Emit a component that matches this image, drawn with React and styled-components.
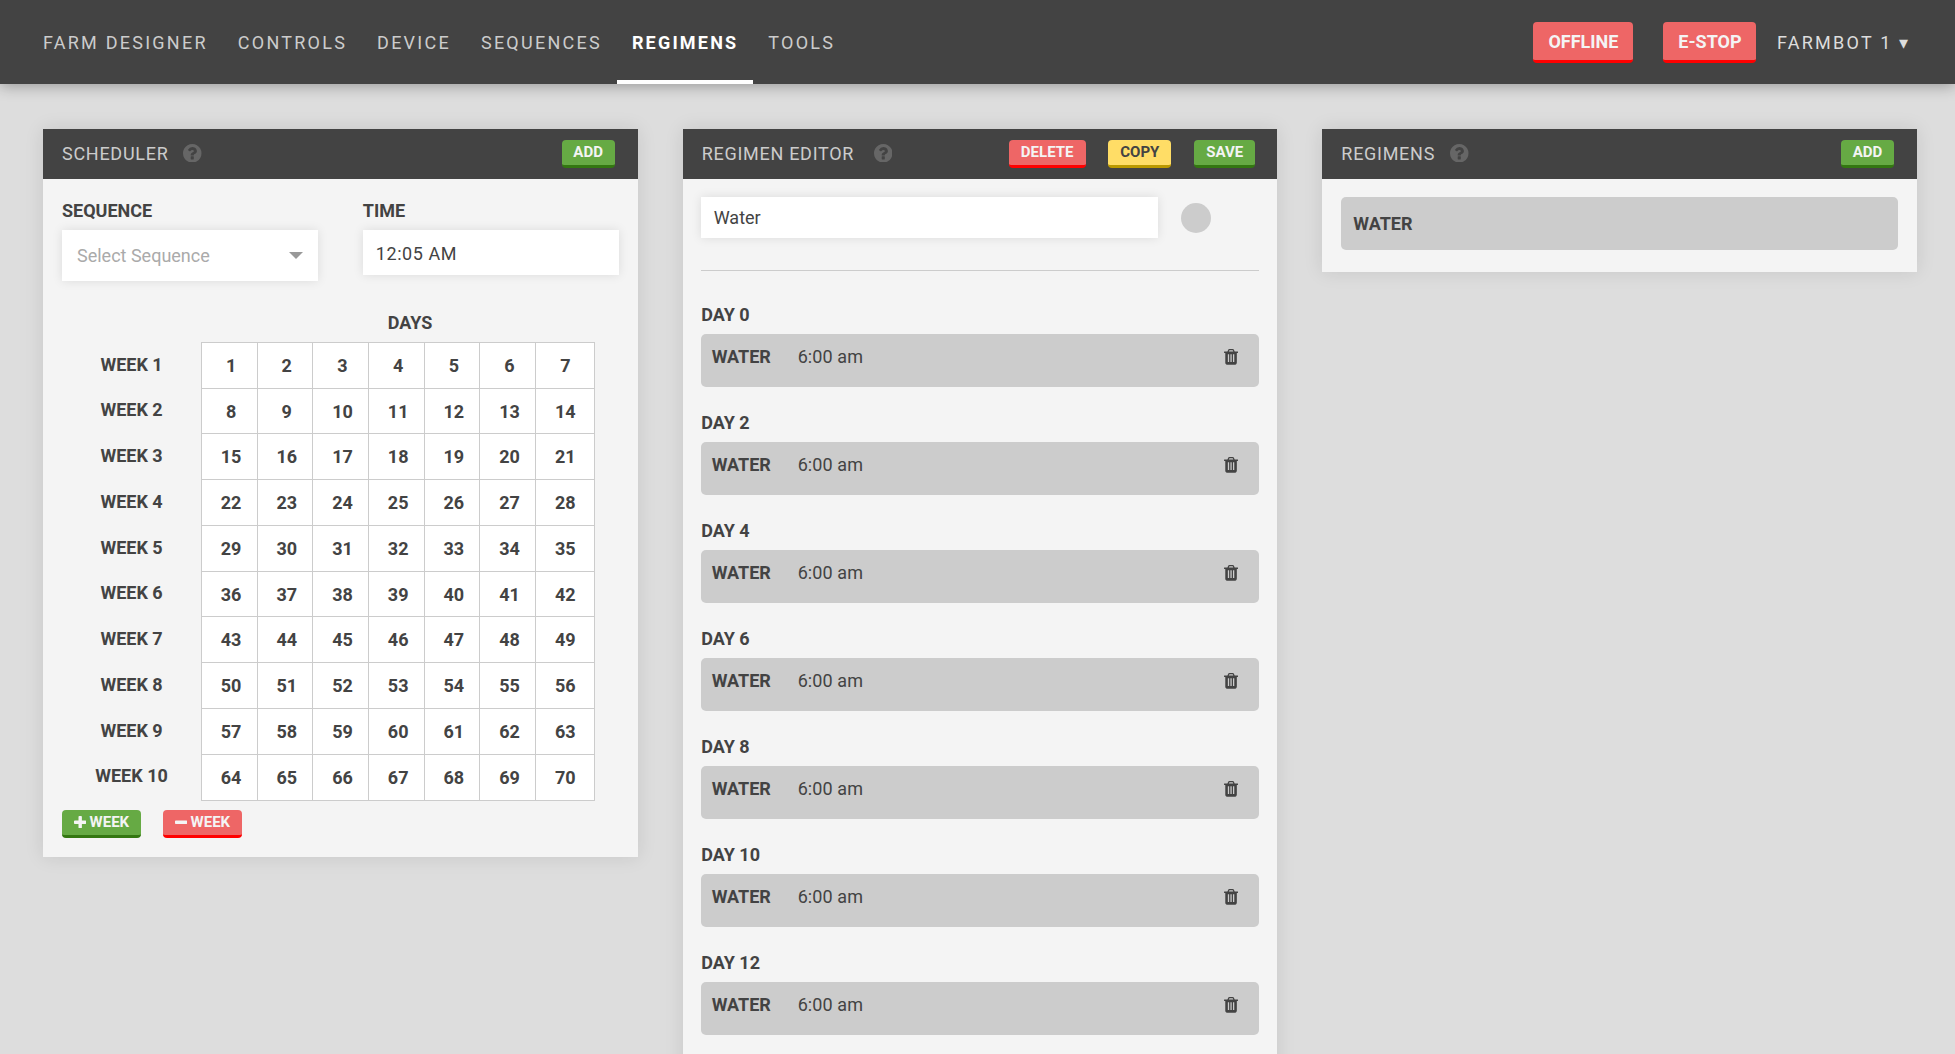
import React from 'react';
import styled, { createGlobalStyle, css } from 'styled-components';

const Global = createGlobalStyle`
  *, *::before, *::after { box-sizing: border-box; }
  html { overflow: hidden; }
  body { margin: 0; background: #ddd; color: #434343; font: 400 18px/24px Roboto, sans-serif; }
`;

const Page = styled.div`
  height: 1054px;
  overflow: hidden;
`;

const Nav = styled.nav`
  display: flex;
  justify-content: space-between;
  height: 84px;
  padding: 0 44.4px 0 28px;
  background: #434343;
  box-shadow: 0 2px 14px rgba(0, 0, 0, 0.32);
`;

const Links = styled.div`
  display: flex;
`;

const NavLink = styled.a`
  padding: 31px 15px 0;
  letter-spacing: 2.25px;
  color: #ccc;
  ${(p) => p.$active && css`
    color: #fff;
    font-weight: 700;
    letter-spacing: 2.2px;
    border-bottom: 4px solid #fff;
  `}
`;

const NavRight = styled.div`
  display: flex;
  align-items: flex-start;
`;

const tones = {
  green: ['#6a4', '#371', '#f4f4f4'],
  red: ['#e66', '#f00', '#f4f4f4'],
  yellow: ['#fd6', '#b90', '#434343'],
};

const Button = styled.button`
  display: flex;
  align-items: flex-start;
  justify-content: center;
  height: 28px;
  width: ${(p) => p.$w}px;
  padding: 3px 0 0;
  border: 0;
  border-bottom: 3px solid ${(p) => tones[p.$tone][1]};
  border-radius: 4px;
  background: ${(p) => tones[p.$tone][0]};
  color: ${(p) => tones[p.$tone][2]};
  font: 700 15px/18px Roboto, sans-serif;
  svg { margin: 2.7px 3.3px 0 0; }
`;

const NavButton = styled(Button)`
  height: 41px;
  margin: 22px 0 0 30px;
  padding-top: 8px;
  font-size: 18px;
  line-height: 24px;
`;

const Account = styled.span`
  margin: 31px 0 0 20.6px;
  letter-spacing: 2.25px;
  color: #ddd;
`;

const Columns = styled.main`
  display: grid;
  grid-template-columns: repeat(3, 1fr);
  gap: 45px;
  align-items: start;
  padding: 45px 38px 0 43px;
`;

const Widget = styled.section`
  background: #f4f4f4;
  box-shadow: 0 0 18px rgba(0, 0, 0, 0.1);
  height: ${(p) => p.$h}px;
`;

const Header = styled.header`
  display: flex;
  align-items: flex-start;
  height: 50px;
  padding: 11px ${(p) => p.$pr || 23}px 0 19px;
  gap: 22.6px;
  background: #434343;
`;

const Title = styled.h3`
  display: flex;
  margin: 2px auto 0 0;
  font-size: 18px;
  font-weight: 400;
  letter-spacing: 0.72px;
  color: #ccc;
  svg { margin: 1.5px 0 0 ${(p) => p.$gap || 15}px; }
`;

const Body = styled.div`
  padding: ${(p) => p.$pad};
`;

const Fields = styled.div`
  display: grid;
  grid-template-columns: 1fr 1fr;
  gap: 45px;
  align-items: start;
`;

const Label = styled.label`
  display: block;
  font-weight: 700;
  line-height: 24px;
`;

const Box = styled.div`
  display: flex;
  align-items: center;
  justify-content: space-between;
  height: ${(p) => p.$h}px;
  padding: 0 15px;
  background: #fff;
  box-shadow: 0 0 10px rgba(0, 0, 0, 0.1);
`;

const SelectBox = styled(Box)`
  margin-top: 7px;
  color: #aaa;
`;

const TimeBox = styled(Box)`
  margin-top: 7px;
  padding: 2px 14px 0 13px;
  letter-spacing: 0.55px;
`;

const Caret = styled.span`
  border: 7px solid transparent;
  border-top-color: #999;
  border-bottom: 0;
`;

const DaysLabel = styled(Label)`
  width: 394px;
  margin: 30px 0 6.75px 151px;
  text-align: center;
`;

const Week = styled.div`
  display: grid;
  grid-template-columns: 139px 394px;
  height: 45.77px;
`;

const WeekLabel = styled.div`
  padding-top: 10.8px;
  font-weight: 700;
  text-align: center;
`;

const Days = styled.div`
  display: grid;
  grid-template-columns: repeat(6, 55.7px) 1fr;
  background: #fff;
  border-top: 1px solid #ccc;
  border-right: 1px solid #ccc;
  ${(p) => p.$last && css`height: 47.3px; border-bottom: 1px solid #ccc;`}
`;

const Day = styled.div`
  padding: 11px 0 0 3.5px;
  border-left: 1px solid #ccc;
  font-weight: 700;
  text-align: center;
  &:last-child { padding-left: 0.5px; }
`;

const WeekButtons = styled.div`
  display: flex;
  gap: 22px;
  margin-top: 10.55px;
`;

const NameRow = styled.div`
  display: flex;
  align-items: flex-start;
  padding-bottom: 32px;
  border-bottom: 1px solid #ccc;
`;

const NameBox = styled(Box)`
  width: 457px;
  padding: 0 13px;
`;

const Swatch = styled.span`
  width: 30px;
  height: 30px;
  margin: 6px 0 0 23px;
  border-radius: 50%;
  background: #ccc;
`;

const Group = styled.div`
  padding-top: 32px;
  height: 108px;
`;

const DayLabel = styled(Label)`
  padding-left: 0.6px;
`;

const Step = styled.div`
  display: flex;
  height: 53px;
  margin-top: 7px;
  padding: 11px 21.3px 0 11px;
  border-radius: 5px;
  background: #ccc;
  b { width: 86px; }
  span { letter-spacing: 0.1px; }
  svg { margin: 4.3px 0 0 auto; }
`;

const Regimen = styled.div`
  height: 53px;
  padding: 15px 12px;
  border-radius: 5px;
  background: #ccc;
  font-weight: 700;
`;

const Help = () => (
  <svg width="18.5" height="18.5" viewBox="128 128 1536 1536" fill="#666" fillRule="evenodd">
    <path d="M1024 1376v-192q0-14-9-23t-23-9h-192q-14 0-23 9t-9 23v192q0 14 9 23t23 9h192q14 0 23-9t9-23zm256-672q0-88-55.5-163t-138.5-116-170-41q-243 0-371 213-15 24 8 42l132 100q7 6 19 6 16 0 25-12 53-68 86-92 34-24 86-24 48 0 85.5 26t37.5 59q0 38-20 61t-68 45q-63 28-115.5 86.5t-52.5 125.5v36q0 14 9 23t23 9h192q14 0 23-9t9-23q0-19 21.5-49.5t54.5-49.5q32-18 49-28.5t46-35 44.5-48 28-60.5 12.5-81zm384 192q0 209-103 385.5t-279.5 279.5-385.5 103-385.5-103-279.5-279.5-103-385.5 103-385.5 279.5-279.5 385.5-103 385.5 103 279.5 279.5 103 385.5z" />
  </svg>
);

const Trash = () => (
  <svg width="14.14" height="15.7" viewBox="192 128 1408 1536" preserveAspectRatio="none" fill="#434343" fillRule="evenodd">
    <path d="M704 1376v-704q0-14-9-23t-23-9h-64q-14 0-23 9t-9 23v704q0 14 9 23t23 9h64q14 0 23-9t9-23zm256 0v-704q0-14-9-23t-23-9h-64q-14 0-23 9t-9 23v704q0 14 9 23t23 9h64q14 0 23-9t9-23zm256 0v-704q0-14-9-23t-23-9h-64q-14 0-23 9t-9 23v704q0 14 9 23t23 9h64q14 0 23-9t9-23zm-544-992h448l-48-117q-7-9-17-11h-317q-10 2-17 11zm928 32v64q0 14-9 23t-23 9h-96v948q0 83-47 143.5t-113 60.5h-832q-66 0-113-58.5t-47-141.5v-952h-96q-14 0-23-9t-9-23v-64q0-14 9-23t23-9h309l70-167q15-37 54-63t79-26h320q40 0 79 26t54 63l70 167h309q14 0 23 9t9 23z" />
  </svg>
);

const plusPath = 'M1600 736v192q0 40-28 68t-68 28h-416v416q0 40-28 68t-68 28h-192q-40 0-68-28t-28-68v-416h-416q-40 0-68-28t-28-68v-192q0-40 28-68t68-28h416v-416q0-40 28-68t68-28h192q40 0 68 28t28 68v416h416q40 0 68 28t28 68z';
const minusPath = 'M1600 736v192q0 40-28 68t-68 28h-1216q-40 0-68-28t-28-68v-192q0-40 28-68t68-28h1216q40 0 68 28t28 68z';

const Sign = ({ plus }) => (
  <svg width="12.4" height="12.4" viewBox="192 128 1408 1408" fill="#f4f4f4">
    <path d={plus ? plusPath : minusPath} />
  </svg>
);

const links = ['FARM DESIGNER', 'CONTROLS', 'DEVICE', 'SEQUENCES', 'REGIMENS', 'TOOLS'];
const weeks = Array.from({ length: 10 }, (_, i) => i);
const week = [1, 2, 3, 4, 5, 6, 7];

export default function App() {
  return (
    <Page>
      <Global />
      <Nav>
        <Links>
          {links.map((l) => <NavLink key={l} $active={l === 'REGIMENS'}>{l}</NavLink>)}
        </Links>
        <NavRight>
          <NavButton $tone="red" $w={100}>OFFLINE</NavButton>
          <NavButton $tone="red" $w={93}>E-STOP</NavButton>
          <Account>FARMBOT 1 ▾</Account>
        </NavRight>
      </Nav>
      <Columns>
        <Widget $h={728}>
          <Header>
            <Title>SCHEDULER<Help /></Title>
            <Button $tone="green" $w={53}>ADD</Button>
          </Header>
          <Body $pad="20px 19px">
            <Fields>
              <div>
                <Label>SEQUENCE</Label>
                <SelectBox $h={51}>Select Sequence<Caret /></SelectBox>
              </div>
              <div>
                <Label>TIME</Label>
                <TimeBox $h={45}>12:05 AM</TimeBox>
              </div>
            </Fields>
            <DaysLabel>DAYS</DaysLabel>
            {weeks.map((w) => (
              <Week key={w}>
                <WeekLabel>WEEK {w + 1}</WeekLabel>
                <Days $last={w === 9}>
                  {week.map((d) => <Day key={d}>{w * 7 + d}</Day>)}
                </Days>
              </Week>
            ))}
            <WeekButtons>
              <Button $tone="green" $w={79}><Sign plus />WEEK</Button>
              <Button $tone="red" $w={79}><Sign />WEEK</Button>
            </WeekButtons>
          </Body>
        </Widget>
        <Widget $h={980}>
          <Header $pr={22}>
            <Title $gap={19.8}>REGIMEN EDITOR<Help /></Title>
            <Button $tone="red" $w={77}>DELETE</Button>
            <Button $tone="yellow" $w={63.2}>COPY</Button>
            <Button $tone="green" $w={61.3}>SAVE</Button>
          </Header>
          <Body $pad="18px 18px">
            <NameRow>
              <NameBox $h={41}>Water</NameBox>
              <Swatch />
            </NameRow>
            {[0, 2, 4, 6, 8, 10, 12].map((d) => (
              <Group key={d}>
                <DayLabel>DAY {d}</DayLabel>
                <Step><b>WATER</b><span>6:00 am</span><Trash /></Step>
              </Group>
            ))}
          </Body>
        </Widget>
        <Widget $h={143}>
          <Header>
            <Title>REGIMENS<Help /></Title>
            <Button $tone="green" $w={53}>ADD</Button>
          </Header>
          <Body $pad="18px 19px">
            <Regimen>WATER</Regimen>
          </Body>
        </Widget>
      </Columns>
    </Page>
  );
}
